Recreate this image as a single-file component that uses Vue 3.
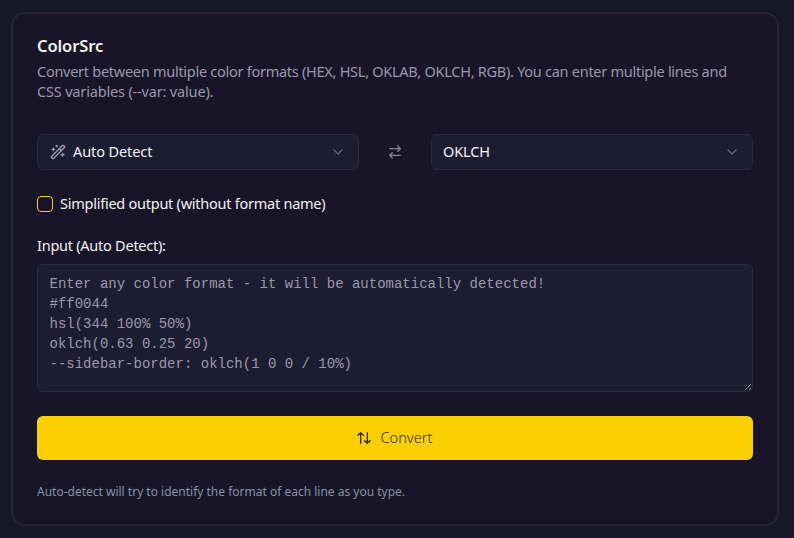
<script setup>
import { ref } from 'vue'

const input = ref('')
const simplified = ref(false)
const placeholder = [
  'Enter any color format - it will be automatically detected!',
  '#ff0044',
  'hsl(344 100% 50%)',
  'oklch(0.63 0.25 20)',
  '--sidebar-border: oklch(1 0 0 / 10%)',
].join('\n')
</script>

<template>
  <main class="page">
    <section class="card">
      <header>
        <h1 class="title">ColorSrc</h1>
        <p class="description">
          <span class="line first">Convert between multiple color formats (HEX, HSL, OKLAB, OKLCH, RGB). You can enter multiple lines and</span>
          <span class="line second">CSS variables (--var: value).</span>
        </p>
      </header>

      <div class="formats">
        <button class="select" type="button">
          <svg class="icon wand" viewBox="0 0 24 24">
            <path d="m21.64 3.64-1.28-1.28a1.21 1.21 0 0 0-1.72 0L2.36 18.64a1.21 1.21 0 0 0 0 1.72l1.28 1.28a1.2 1.2 0 0 0 1.72 0L21.64 5.36a1.2 1.2 0 0 0 0-1.72" />
            <path d="m14 7 3 3M5 6v4M19 14v4M10 2v2M7 8H3M21 16h-4M11 3H9" />
          </svg>
          <span class="auto">Auto Detect</span>
          <svg class="icon chevron" viewBox="0 0 24 24"><path d="m6 9 6 6 6-6" /></svg>
        </button>
        <svg class="icon swap" viewBox="0 0 24 24">
          <path d="m16 3 4 4-4 4M20 7H4M8 21l-4-4 4-4M4 17h16" />
        </svg>
        <button class="select" type="button">
          <span class="oklch">OKLCH</span>
          <svg class="icon chevron" viewBox="0 0 24 24"><path d="m6 9 6 6 6-6" /></svg>
        </button>
      </div>

      <label class="check">
        <input v-model="simplified" type="checkbox" />
        <span>Simplified output (without format name)</span>
      </label>

      <label class="label" for="source"><span>Input (Auto Detect):</span></label>
      <textarea id="source" v-model="input" :placeholder="placeholder" spellcheck="false"></textarea>

      <button class="convert" type="button">
        <svg class="icon" viewBox="0 0 24 24">
          <path d="m3 8 4-4 4 4M7 4v16M21 16l-4 4-4-4M17 20V4" />
        </svg>
        <span>Convert</span>
      </button>
      <p class="note">Auto-detect will try to identify the format of each line as you type.</p>
    </section>
  </main>
</template>

<style>
body {
  background: #17192b;
}
</style>

<style scoped>
* {
  box-sizing: border-box;
}
.page {
  height: 538px;
  padding: 12px 15px 12px 11px;
  background: #17192b;
  font-family: "Noto Sans", "Open Sans", sans-serif;
  color: #f3f2f5;
}
.card {
  display: flex;
  flex-direction: column;
  height: 514px;
  padding: 22px 24px;
  border: 2px solid #272438;
  border-radius: 14px;
  background: #181528;
  box-shadow: 0 1px 3px rgba(0, 0, 0, 0.1);
}
.title {
  margin: 0;
  font-size: 16.5px;
  line-height: 20px;
  font-weight: 600;
  letter-spacing: -0.1px;
}
.description {
  margin: 5px 0 0;
  font-size: 14.5px;
  line-height: 20px;
  color: #9c98ab;
}
.line {
  display: block;
  white-space: nowrap;
}
.first {
  letter-spacing: -0.27px;
}
.second {
  letter-spacing: -0.17px;
}
.formats {
  display: flex;
  align-items: center;
  justify-content: space-between;
  margin-top: 33px;
}
.select {
  display: flex;
  align-items: center;
  width: 322px;
  height: 36px;
  padding: 0 12px;
  border: 1px solid #2b2840;
  border-radius: 6px;
  background: #1d1d31;
  color: inherit;
  font: 14.5px "Noto Sans", sans-serif;
}
.select span {
  margin-left: -1px;
  padding-bottom: 2px;
}
.icon {
  width: 16px;
  height: 16px;
  fill: none;
  stroke: currentColor;
  stroke-width: 2;
  stroke-linecap: round;
  stroke-linejoin: round;
  flex: none;
}
.wand {
  margin-right: 8px;
  color: #a29eb1;
}
.chevron {
  margin-left: auto;
  color: #65637a;
}
.swap {
  color: #85828f;
}
.auto {
  letter-spacing: -0.1px;
}
.oklch {
  letter-spacing: -0.1px;
}
.check {
  display: flex;
  align-items: center;
  gap: 7px;
  height: 20px;
  margin-top: 24px;
  font-size: 14.5px;
  letter-spacing: -0.25px;
}
.check span {
  padding-bottom: 2px;
}
.check input {
  appearance: none;
  width: 16px;
  height: 16px;
  margin: 0;
  border: 1px solid #fad000;
  border-radius: 4px;
}
.check input:checked {
  background: #fad000;
}
.label {
  margin-top: 21px;
  font-size: 14.5px;
  line-height: 20px;
  letter-spacing: -0.25px;
}
textarea {
  flex: none;
  width: 100%;
  height: 128px;
  margin: 9px 0 0;
  padding: 9px 12px 7px 11.5px;
  border: 1px solid #2b2840;
  border-radius: 6px;
  outline: none;
  background: #1d1d31;
  color: #f3f2f5;
  font: 14px/20px "Liberation Mono", monospace;
  resize: vertical;
}
textarea::placeholder {
  color: #9c98ab;
}
.convert {
  display: flex;
  align-items: center;
  justify-content: center;
  gap: 8px;
  flex: none;
  height: 44px;
  margin-top: 24px;
  padding: 0 1px 0 0;
  border: 0;
  border-radius: 6px;
  background: #fad000;
  color: #32290d;
  font: 300 14.5px "Noto Sans", sans-serif;
  letter-spacing: 0.05px;
}
.convert span {
  padding-bottom: 2px;
}
.note {
  margin: 24px 0 0;
  color: #8b90a5;
  font-size: 12px;
  line-height: 16px;
  white-space: nowrap;
}
</style>
